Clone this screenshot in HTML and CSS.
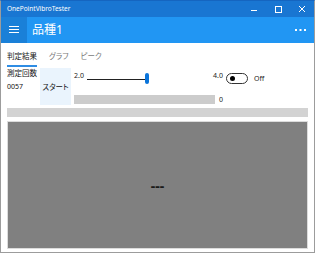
FILE: index.html
```
<!DOCTYPE html>
<html lang="ja">
<head>
    <meta charset="UTF-8">
    <meta name="viewport" content="width=device-width, initial-scale=1.0">
    <title>OnePointVibroTester</title>
    <link rel="stylesheet" href="styles.css">
</head>
<body>
    <div class="window">
        <!-- タイトルバー -->
        <div class="titlebar">
            <span class="app-title">OnePointVibroTester</span>
            <div class="caption-buttons">
                <svg class="caption-btn" width="24" height="16" viewBox="0 0 24 16">
                    <line x1="9" y1="9.5" x2="15" y2="9.5" stroke="#fff" stroke-width="1"/>
                </svg>
                <svg class="caption-btn" width="24" height="16" viewBox="0 0 24 16">
                    <rect x="9.5" y="5.5" width="6" height="6" fill="none" stroke="#fff" stroke-width="1"/>
                </svg>
                <svg class="caption-btn" width="24" height="16" viewBox="0 0 24 16">
                    <path d="M9 5 L15 11 M15 5 L9 11" stroke="#fff" stroke-width="1"/>
                </svg>
            </div>
        </div>

        <!-- アプリバー -->
        <div class="appbar">
            <div class="hamburger">
                <svg width="12" height="10" viewBox="0 0 12 10">
                    <path d="M1 1.5 H11 M1 4.5 H11 M1 7.5 H11" stroke="#fff" stroke-width="1"/>
                </svg>
            </div>
            <span class="page-title">品種1</span>
            <svg class="more" width="12" height="4" viewBox="0 0 12 4">
                <rect x="0" y="1" width="2" height="2" fill="#fff"/>
                <rect x="4.5" y="1" width="2" height="2" fill="#fff"/>
                <rect x="9" y="1" width="2" height="2" fill="#fff"/>
            </svg>
        </div>

        <div class="content">
            <div class="tabs">
                <div class="tab active">判定結果</div>
                <div class="tab">グラフ</div>
                <div class="tab">ピーク</div>
            </div>

            <div class="controls">
                <div class="count">
                    <div class="count-label">測定回数</div>
                    <div class="count-value">0057</div>
                </div>
                <div class="start-btn">スタート</div>
                <div class="settings">
                    <div class="slider-row">
                        <span class="range-label">2.0</span>
                        <div class="slider">
                            <div class="slider-track"></div>
                            <div class="slider-thumb"></div>
                        </div>
                        <span class="range-label max">4.0</span>
                        <div class="toggle"><div class="toggle-dot"></div></div>
                        <span class="toggle-label">Off</span>
                    </div>
                    <div class="progress-row">
                        <div class="progress"></div>
                        <span class="progress-value">0</span>
                    </div>
                </div>
            </div>

            <div class="status-bar"></div>
            <div class="result-panel">---</div>
        </div>
    </div>
</body>
</html>
```

FILE: styles.css
```
* {
    box-sizing: border-box;
}

body {
    margin: 0;
    padding: 0;
    background-color: #ffffff;
    font-family: 'Noto Sans', 'Noto Sans CJK JP', sans-serif;
    font-feature-settings: "palt";
}

.window {
    width: 315px;
    height: 253px;
    border: 1px solid #9c9c9c;
    border-top-color: #1565c0;
    display: flex;
    flex-direction: column;
    overflow: hidden;
}

/* タイトルバー */
.titlebar {
    height: 16px;
    background-color: #1976d2;
    display: flex;
    align-items: center;
    padding-left: 6px;
}

.app-title {
    color: #ffffff;
    font-size: 6.5px;
    line-height: 16px;
}

.caption-buttons {
    margin-left: auto;
    display: flex;
}

.caption-btn {
    display: block;
}

/* アプリバー */
.appbar {
    height: 26px;
    background-color: #2196f3;
    display: flex;
    align-items: center;
}

.hamburger {
    width: 26px;
    height: 26px;
    background-color: #1a80d8;
    display: flex;
    align-items: center;
    justify-content: center;
}

.page-title {
    color: #ffffff;
    font-size: 12px;
    margin-left: 5px;
    line-height: 26px;
}

.more {
    margin-left: auto;
    margin-right: 7px;
}

/* コンテンツ */
.content {
    flex: 1;
    padding: 0 6px;
    display: flex;
    flex-direction: column;
}

.tabs {
    display: flex;
    height: 24px;
    padding-top: 4px;
}

.tab {
    font-size: 7.5px;
    line-height: 18px;
    color: #7a7a7a;
    margin-right: 12px;
    height: 20px;
}

.tab.active {
    color: #111111;
    border-bottom: 2px solid #2f8de4;
}

.controls {
    display: flex;
    margin-top: 1px;
    height: 37px;
}

.count {
    width: 33px;
    color: #111111;
}

.count-label {
    font-size: 7.5px;
    line-height: 10px;
}

.count-value {
    font-size: 7px;
    line-height: 10px;
    margin-top: 4px;
}

.start-btn {
    width: 31px;
    background-color: #eaf4fd;
    display: flex;
    align-items: center;
    justify-content: center;
    font-size: 7.5px;
    color: #111111;
}

.settings {
    margin-left: 3px;
    flex: 1;
}

.slider-row {
    display: flex;
    align-items: center;
    height: 12px;
    margin-top: 4px;
}

.range-label {
    font-size: 7px;
    color: #222222;
    width: 13px;
    align-self: flex-start;
    line-height: 8px;
}

.range-label.max {
    margin-left: 64px;
}

.slider {
    width: 62px;
    height: 12px;
    position: relative;
    display: flex;
    align-items: center;
}

.slider-track {
    width: 100%;
    height: 1px;
    background-color: #222222;
    margin-top: 2px;
}

.slider-thumb {
    position: absolute;
    right: 0;
    top: 1px;
    width: 4px;
    height: 11px;
    border-radius: 2px;
    background-color: #0a74da;
}

.toggle {
    width: 22px;
    height: 11px;
    border: 1px solid #333333;
    border-radius: 6px;
    display: flex;
    align-items: center;
    padding-left: 3px;
}

.toggle-dot {
    width: 5px;
    height: 5px;
    border-radius: 50%;
    background-color: #000000;
}

.toggle-label {
    font-size: 7px;
    color: #222222;
    margin-left: 6px;
}

.progress-row {
    display: flex;
    align-items: center;
    margin-top: 11px;
}

.progress {
    width: 141px;
    height: 9px;
    background-color: #cccccc;
}

.progress-value {
    font-size: 7px;
    color: #222222;
    margin-left: 4px;
    line-height: 9px;
}

.status-bar {
    height: 9px;
    margin-top: 3px;
    background-color: #d3d3d3;
}

.result-panel {
    height: 128px;
    margin-top: 4px;
    background-color: #808080;
    border: 1px solid #dcdcdc;
    display: flex;
    align-items: center;
    justify-content: center;
    font-size: 14px;
    font-weight: bold;
    color: #1a1a1a;
}
```
